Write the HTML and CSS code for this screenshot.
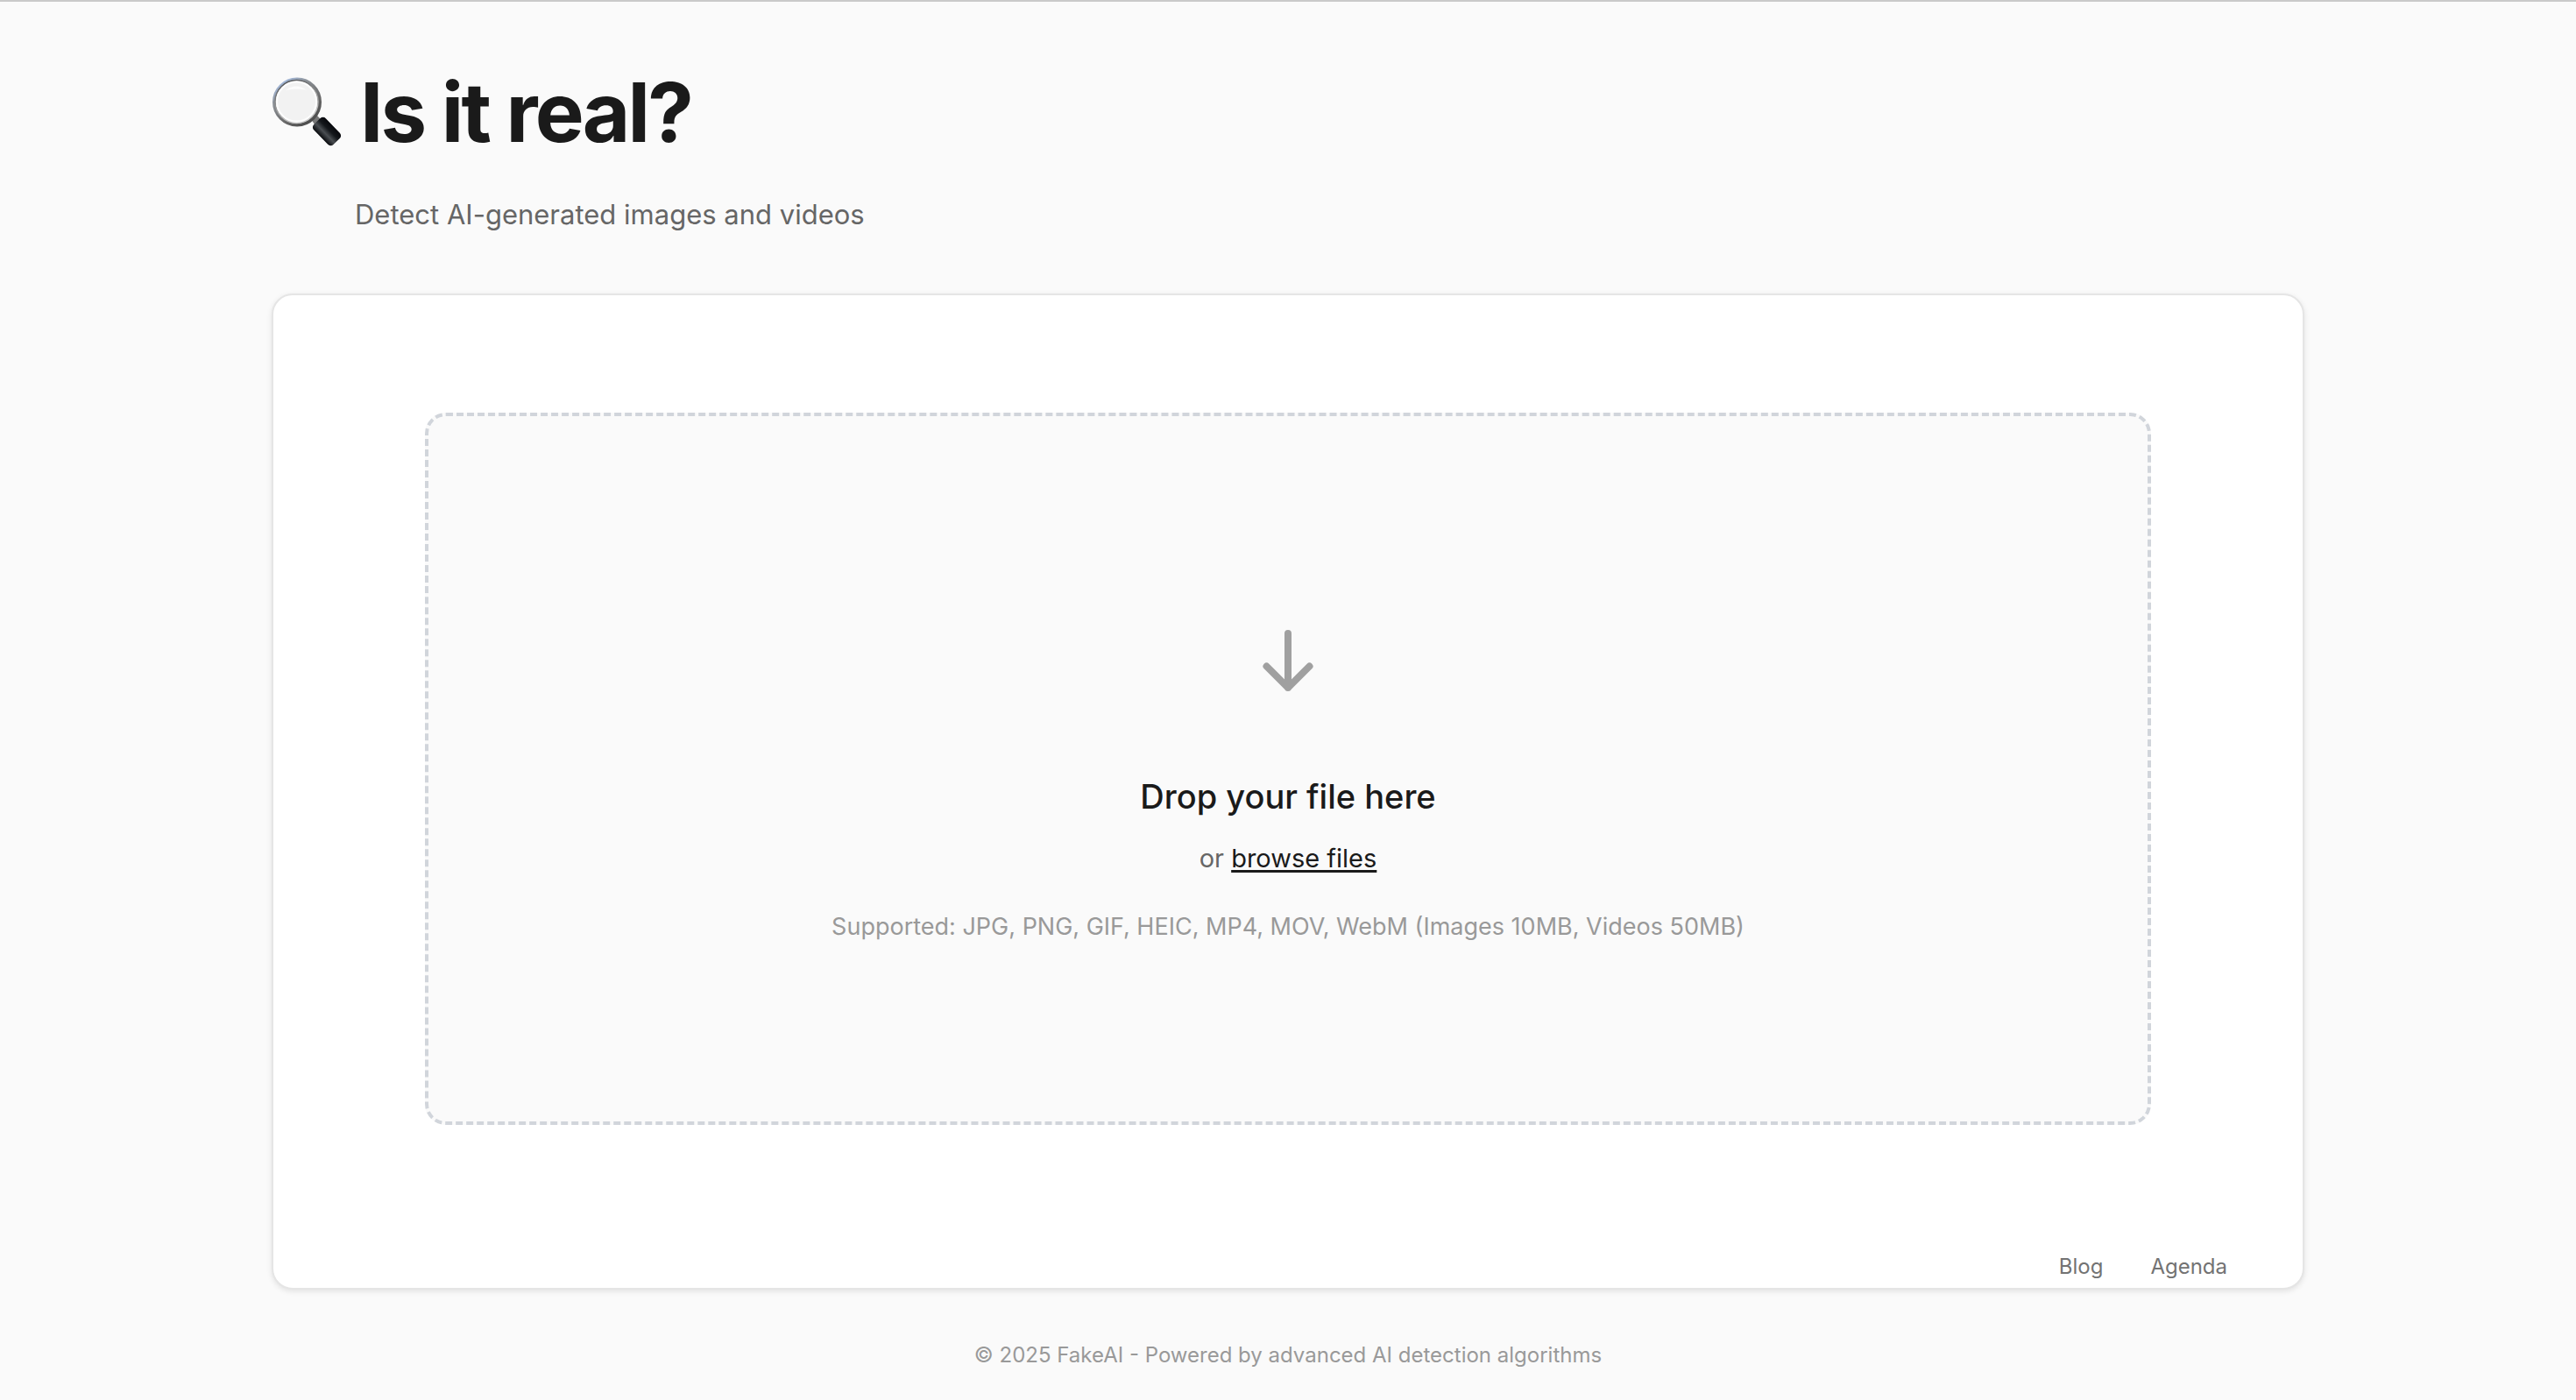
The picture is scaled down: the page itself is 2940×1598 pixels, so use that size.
FILE: index.html
```html
<!DOCTYPE html>
<html lang="en">
<head>
<meta charset="utf-8">
<title>Is it real?</title>
<link rel="stylesheet" href="styles.css">
</head>
<body>
<div class="page">
  <header class="header">
    <h1 class="title">
      <svg class="title-icon" viewBox="0 0 80 80" aria-hidden="true">
        <defs>
          <linearGradient id="rim" x1="0.1" y1="0" x2="0.8" y2="1">
            <stop offset="0" stop-color="#a9c4ef"/>
            <stop offset="0.3" stop-color="#8d9298"/>
            <stop offset="0.7" stop-color="#686868"/>
            <stop offset="1" stop-color="#484848"/>
          </linearGradient>
          <linearGradient id="inner-rim" x1="0" y1="0" x2="0.4" y2="1">
            <stop offset="0" stop-color="#46494c"/>
            <stop offset="0.6" stop-color="#9b9b9b"/>
            <stop offset="1" stop-color="#c8c8c8"/>
          </linearGradient>
          <linearGradient id="grip" x1="0" y1="0" x2="0" y2="1">
            <stop offset="0" stop-color="#07080c"/>
            <stop offset="0.35" stop-color="#14171b"/>
            <stop offset="0.65" stop-color="#4a4e52"/>
            <stop offset="1" stop-color="#07090c"/>
          </linearGradient>
        </defs>
        <path d="M45 48 51 43 56 48 49 54z" fill="#777"/>
        <circle cx="29" cy="28.500" r="26" fill="#f2f2f2" stroke="url(#rim)" stroke-width="4"/>
        <circle cx="28.500" cy="28" r="24.500" fill="#f2f2f2" stroke="url(#inner-rim)" stroke-width="1.500"/>
        <circle cx="28.500" cy="28" r="22.500" fill="#f2f2f2" stroke="#fdfdfd" stroke-width="2"/>
        <path d="M16 15c7-6 17-6 24 0-7-2-17-1-24 0z" fill="#fcfcfc"/>
        <rect x="-16" y="-9.500" width="32" height="19" rx="4.500" fill="url(#grip)" transform="translate(63 62) rotate(46)"/>
      </svg>
      <span>Is it real?</span>
    </h1>
    <p class="subtitle">Detect AI-generated images and videos</p>
  </header>

  <main class="card">
    <section class="dropzone">
      <svg class="arrow" viewBox="0 0 58 70" aria-hidden="true">
        <path d="M29 4v62M4.500 41.500 29 66l24.500-24.500"/>
      </svg>
      <h2 class="drop-title">Drop your file here</h2>
      <p class="drop-text">or <button class="browse" type="button">browse files</button></p>
      <p class="formats">Supported: JPG, PNG, GIF, HEIC, MP4, MOV, WebM (Images 10MB, Videos 50MB)</p>
    </section>
    <nav class="links">
      <a href="#blog">Blog</a>
      <a href="#agenda">Agenda</a>
    </nav>
  </main>

  <footer class="footer">© 2025 FakeAI - Powered by advanced AI detection algorithms</footer>
</div>
</body>
</html>
```
FILE: styles.css
```css
* {
  box-sizing: border-box;
  margin: 0;
  padding: 0;
}

body {
  min-height: 100vh;
  border-top: 2px solid #c9c9c9;
  background: #fafafa;
  color: #1a1a1a;
  font-family: Inter, "Liberation Sans", sans-serif;
}

.page {
  max-width: 2400px;
  margin: 0 auto;
  padding: 70px 40px 24px;
}

.header {
  margin-bottom: 70px;
}

.title {
  display: flex;
  align-items: center;
  gap: 21px;
  font-size: 94px;
  font-weight: 700;
  line-height: 112px;
  letter-spacing: -0.03em;
}

.title-icon {
  width: 80px;
  height: 80px;
}

.subtitle {
  margin-top: 41px;
  padding-left: 95px;
  color: #666;
  font-size: 31px;
  line-height: 40px;
}

.card {
  padding: 134px 86px 8px;
  border: 2px solid #e5e5e5;
  border-radius: 24px;
  background: #fff;
  box-shadow: 0 2px 6px rgba(0, 0, 0, 0.1);
}

.dropzone {
  display: flex;
  flex-direction: column;
  align-items: center;
  margin: 0 87px 146px;
  padding: 244px 32px 202px;
  border: 4px dashed #d1d5db;
  border-radius: 24px;
  background: #fafafa;
  text-align: center;
}

.arrow {
  width: 58px;
  height: 70px;
  margin-bottom: 96px;
  fill: none;
  stroke: #a0a0a0;
  stroke-width: 8;
  stroke-linecap: round;
  stroke-linejoin: round;
}

.drop-title {
  margin-bottom: 27px;
  font-size: 38px;
  font-weight: 500;
  line-height: 48px;
}

.drop-text {
  margin-bottom: 38px;
  color: #666;
  font-size: 29px;
  line-height: 40px;
}

.browse {
  border: 0;
  background: none;
  color: #1a1a1a;
  font: inherit;
  line-height: 32px;
  text-decoration: underline;
  text-decoration-thickness: 3px;
  text-underline-offset: 3px;
  cursor: pointer;
}

.formats {
  color: #999;
  font-size: 27px;
  line-height: 40px;
}

.links {
  display: flex;
  justify-content: flex-end;
  gap: 54px;
  font-size: 24px;
  line-height: 32px;
}

.links a {
  color: #737373;
  text-decoration: none;
}

.footer {
  margin-top: 59px;
  color: #999;
  font-size: 24px;
  line-height: 32px;
  text-align: center;
}
```
